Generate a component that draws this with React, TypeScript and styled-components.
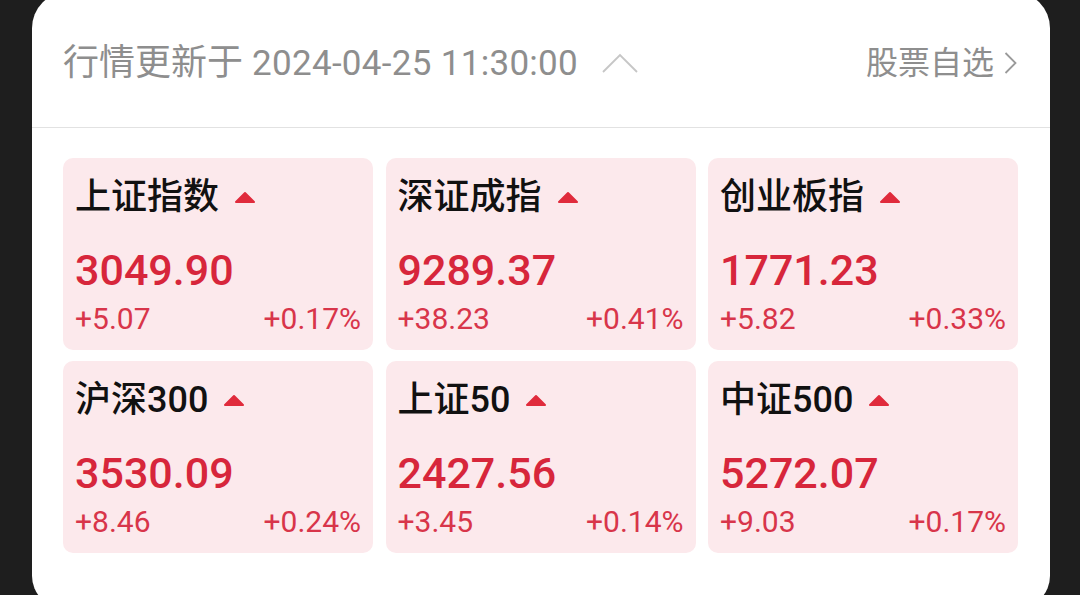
import { ReactElement } from 'react';
import styled, { createGlobalStyle } from 'styled-components';

const GlobalStyle = createGlobalStyle`
  html, body {
    margin: 0;
    padding: 0;
    background: #1e1e1e;
    overflow: hidden;
  }
  body {
    font-family: Roboto, "Noto Sans CJK SC", sans-serif;
  }
`;

const Screen = styled.div`
  width: 1080px;
  height: 595px;
  padding-left: 32px;
  box-sizing: border-box;
  overflow: hidden;
`;

const Panel = styled.div`
  width: 1018px;
  height: 616px;
  margin-top: -8px;
  background: #ffffff;
  border-radius: 36px 36px 32px 32px;
  display: flex;
  flex-direction: column;
`;

const Header = styled.div`
  height: 136px;
  padding: 7px 33px 0 31px;
  box-sizing: border-box;
  display: flex;
  align-items: center;
  justify-content: space-between;
  border-bottom: 1px solid #e2e2e2;
`;

const UpdateInfo = styled.div`
  display: flex;
  align-items: center;
  gap: 24px;
`;

const UpdateText = styled.span`
  font-size: 35px;
  letter-spacing: 0.3px;
  color: #8e8e8e;
  line-height: 40px;
  white-space: nowrap;
`;

const UpdateLabel = styled.span`
  font-size: 36px;
  letter-spacing: 0;
`;

const Link = styled.div`
  display: flex;
  align-items: center;
  gap: 10px;
  font-size: 32px;
  line-height: 40px;
  color: #8e8e8e;
`;

const Grid = styled.div`
  display: grid;
  grid-template-columns: repeat(3, 1fr);
  grid-auto-rows: 192px;
  column-gap: 12.5px;
  row-gap: 11px;
  padding: 30px 32px 0 31px;
`;

const Tile = styled.div`
  background: #fce9ec;
  border-radius: 10px;
  padding: 19px 12px 0 12px;
  display: flex;
  flex-direction: column;
`;

const TitleRow = styled.div`
  display: flex;
  align-items: center;
  gap: 15px;
  height: 40px;
`;

const Title = styled.span`
  font-size: 36px;
  line-height: 40px;
  font-weight: 500;
  color: #111111;
  white-space: nowrap;
`;

const Price = styled.div`
  margin-top: 29px;
  font-size: 43px;
  line-height: 48px;
  font-weight: 500;
  color: #d7263b;
`;

const ChangeRow = styled.div`
  margin-top: 7px;
  display: flex;
  justify-content: space-between;
  font-size: 30px;
  line-height: 36px;
  color: #d8354a;
`;

const UpTriangle = (): ReactElement => (
  <svg width="22" height="13" viewBox="0 0 22 13">
    <path
      d="M11 2 L20 11 L2 11 Z"
      fill="#e02b3c"
      stroke="#e02b3c"
      strokeWidth="2"
      strokeLinejoin="round"
    />
  </svg>
);

type Index = {
  name: string;
  price: string;
  change: string;
  percent: string;
};

const indexes: Index[] = [
  { name: '上证指数', price: '3049.90', change: '+5.07', percent: '+0.17%' },
  { name: '深证成指', price: '9289.37', change: '+38.23', percent: '+0.41%' },
  { name: '创业板指', price: '1771.23', change: '+5.82', percent: '+0.33%' },
  { name: '沪深300', price: '3530.09', change: '+8.46', percent: '+0.24%' },
  { name: '上证50', price: '2427.56', change: '+3.45', percent: '+0.14%' },
  { name: '中证500', price: '5272.07', change: '+9.03', percent: '+0.17%' },
];

export default function App(): ReactElement {
  return (
    <>
      <GlobalStyle />
      <Screen>
        <Panel>
          <Header>
            <UpdateInfo>
              <UpdateText>
                <UpdateLabel>行情更新于</UpdateLabel> 2024-04-25 11:30:00
              </UpdateText>
              <svg width="36" height="20" viewBox="0 0 36 20">
                <path d="M1 19 L18 2 L35 19" fill="none" stroke="#c6c6c6" strokeWidth="1.8" />
              </svg>
            </UpdateInfo>
            <Link>
              股票自选
              <svg width="13" height="22" viewBox="0 0 13 22">
                <path d="M1.5 1 L11.5 11 L1.5 21" fill="none" stroke="#9a9a9a" strokeWidth="1.8" />
              </svg>
            </Link>
          </Header>
          <Grid>
            {indexes.map((item) => (
              <Tile key={item.name}>
                <TitleRow>
                  <Title>{item.name}</Title>
                  <UpTriangle />
                </TitleRow>
                <Price>{item.price}</Price>
                <ChangeRow>
                  <span>{item.change}</span>
                  <span>{item.percent}</span>
                </ChangeRow>
              </Tile>
            ))}
          </Grid>
        </Panel>
      </Screen>
    </>
  );
}
